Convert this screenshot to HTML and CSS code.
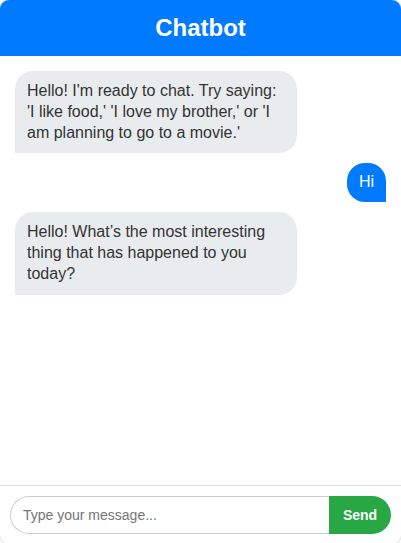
FILE: index.html
```html
<!DOCTYPE html>
<html lang="en">
<head>
    <meta charset="UTF-8">
    <meta name="viewport" content="width=device-width, initial-scale=1.0">
    <title>Chatbot</title>
    <link rel="stylesheet" href="styles.css">
</head>
<body>

<div class="chat-container">
    <div class="chat-header">Chatbot</div>

    <div class="chat-messages">
        <div class="message bot">Hello! I'm ready to chat. Try saying: 'I like food,' 'I love my brother,' or 'I am planning to go to a movie.'</div>
        <div class="message user">Hi</div>
        <div class="message bot">Hello! What’s the most interesting thing that has happened to you today?</div>
    </div>

    <div class="chat-input">
        <input type="text" id="userInput" placeholder="Type your message...">
        <button id="sendBtn">Send</button>
    </div>
</div>

</body>
</html>
```

FILE: styles.css
```css
body {
    font-family: "Liberation Sans", Arial, sans-serif;
    margin: 0;
    background-color: #fff;
    overflow: hidden;
}
.chat-container {
    width: 401px;
    height: 544px;
    margin: -1px 0 0 -1px;
    border: 1px solid #ddd;
    border-radius: 10px;
    overflow: hidden;
    display: flex;
    flex-direction: column;
    background-color: #fff;
}
.chat-header {
    background-color: #007bff;
    color: #fff;
    height: 56px;
    display: flex;
    justify-content: center;
    align-items: center;
    font-size: 24px;
    font-weight: bold;
    flex-shrink: 0;
}
.chat-messages {
    flex: 1;
    padding: 15px;
    display: flex;
    flex-direction: column;
    gap: 10px;
}
.message {
    max-width: 76%;
    padding: 10px 12px;
    font-size: 16px;
    line-height: 1.3;
    border-radius: 18px;
    box-sizing: border-box;
}
.message.bot {
    align-self: flex-start;
    background-color: #e9ecef;
    color: #333;
    border-bottom-left-radius: 0;
}
.message.user {
    align-self: flex-end;
    padding: 9px 12px;
    background-color: #007bff;
    color: #fff;
    border-bottom-right-radius: 0;
}
.chat-input {
    display: flex;
    padding: 10px;
    border-top: 1px solid #ddd;
}
.chat-input input {
    flex: 1;
    height: 38px;
    box-sizing: border-box;
    padding: 0 12px;
    font-family: inherit;
    font-size: 14px;
    border: 1px solid #ccc;
    border-right: none;
    border-radius: 20px 0 0 20px;
    outline: none;
}
.chat-input input::placeholder {
    color: #757575;
}
.chat-input button {
    width: 62px;
    height: 38px;
    background-color: #28a745;
    color: #fff;
    border: none;
    border-radius: 0 20px 20px 0;
    font-family: inherit;
    font-size: 14px;
    font-weight: bold;
    cursor: pointer;
}
```
